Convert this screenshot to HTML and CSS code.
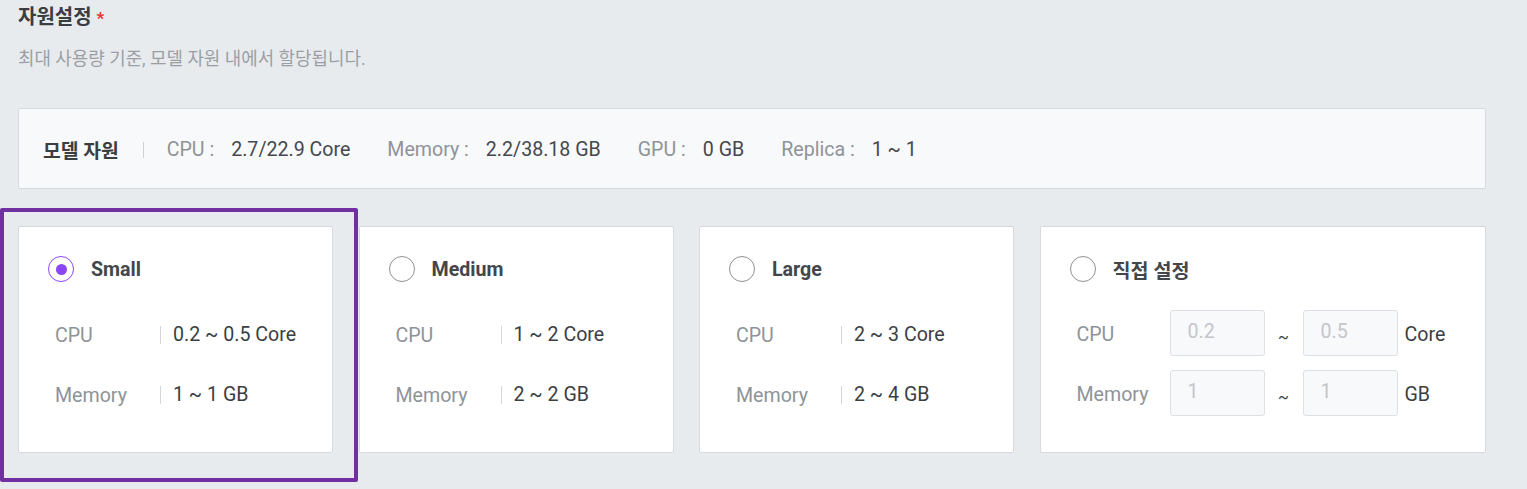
FILE: index.html
```html
<!DOCTYPE html>
<html lang="ko">
<head>
<meta charset="utf-8">
<link rel="stylesheet" href="styles.css">
</head>
<body>
<div class="page">
  <div class="title">자원설정 <span class="req">*</span></div>
  <div class="desc">최대 사용량 기준, 모델 자원 내에서 할당됩니다.</div>

  <div class="model-box">
    <span class="model-title">모델 자원</span>
    <span class="vsep"></span>
    <span class="stat"><span class="stat-label">CPU :</span><span class="stat-value">2.7/22.9 Core</span></span>
    <span class="stat"><span class="stat-label">Memory :</span><span class="stat-value">2.2/38.18 GB</span></span>
    <span class="stat"><span class="stat-label">GPU :</span><span class="stat-value">0 GB</span></span>
    <span class="stat"><span class="stat-label">Replica :</span><span class="stat-value">1 ~ 1</span></span>
  </div>

  <div class="cards">
    <div class="card">
      <div class="card-head"><span class="radio checked"></span><span class="card-name">Small</span></div>
      <div class="spec"><span class="spec-label">CPU</span><span class="spec-value">0.2 ~ 0.5 Core</span></div>
      <div class="spec"><span class="spec-label">Memory</span><span class="spec-value">1 ~ 1 GB</span></div>
    </div>
    <div class="card">
      <div class="card-head"><span class="radio"></span><span class="card-name">Medium</span></div>
      <div class="spec"><span class="spec-label">CPU</span><span class="spec-value">1 ~ 2 Core</span></div>
      <div class="spec"><span class="spec-label">Memory</span><span class="spec-value">2 ~ 2 GB</span></div>
    </div>
    <div class="card">
      <div class="card-head"><span class="radio"></span><span class="card-name">Large</span></div>
      <div class="spec"><span class="spec-label">CPU</span><span class="spec-value">2 ~ 3 Core</span></div>
      <div class="spec"><span class="spec-label">Memory</span><span class="spec-value">2 ~ 4 GB</span></div>
    </div>
    <div class="card custom">
      <div class="card-head"><span class="radio"></span><span class="card-name">직접 설정</span></div>
      <div class="custom-rows">
        <div class="crow">
          <span class="clabel">CPU</span>
          <input class="cinput" value="0.2" disabled>
          <span class="tilde">~</span>
          <input class="cinput" value="0.5" disabled>
          <span class="unit">Core</span>
        </div>
        <div class="crow">
          <span class="clabel">Memory</span>
          <input class="cinput" value="1" disabled>
          <span class="tilde">~</span>
          <input class="cinput" value="1" disabled>
          <span class="unit">GB</span>
        </div>
      </div>
    </div>
  </div>
</div>
<div class="highlight"></div>
</body>
</html>
```

FILE: styles.css
```css
* { box-sizing: border-box; }
html, body {
  margin: 0;
  padding: 0;
  background: #e8ebee;
  width: 1527px;
  height: 489px;
  overflow: hidden;
  font-family: Roboto, "Noto Sans CJK KR", sans-serif;
  color: #3b3e43;
}
.page {
  padding: 4px 41px 0 18px;
}
.title {
  font-size: 20px;
  line-height: 26px;
  font-weight: 700;
  color: #3a3d42;
}
.req { color: #f0302c; font-size: 17px; }
.desc {
  margin-top: 16px;
  font-size: 17.9px;
  line-height: 24px;
  color: #9b9fa4;
}
.model-box {
  margin-top: 37px;
  height: 81px;
  background: #f8f9fa;
  border: 1px solid #d6dade;
  border-radius: 2px;
  display: flex;
  align-items: center;
  padding: 2px 0 0 24px;
  font-size: 19.6px;
}
.model-title {
  font-weight: 700;
  font-size: 19.3px;
  color: #3a3d42;
}
.vsep {
  width: 1px;
  height: 16px;
  background: #cfd3d7;
  margin: 0 23px 0 24px;
}
.stat { display: flex; margin-right: 37px; }
.stat-label { color: #8e9399; margin-right: 17px; }
.stat-value { color: #45484d; }

.cards {
  margin-top: 37px;
  display: grid;
  grid-template-columns: 315px 315px 315px 1fr;
  column-gap: 25.5px;
}
.card {
  height: 227px;
  background: #ffffff;
  border: 1px solid #d6dade;
  border-radius: 2px;
  padding: 29px 0 0 29px;
}
.card-head {
  display: flex;
  align-items: center;
  height: 26px;
  margin-bottom: 41px;
}
.radio {
  width: 26px;
  height: 26px;
  border-radius: 50%;
  border: 1.5px solid #8f9194;
  display: flex;
  align-items: center;
  justify-content: center;
  flex-shrink: 0;
}
.radio.checked { border-color: #8a47f5; }
.radio.checked::after {
  content: "";
  width: 11px;
  height: 11px;
  border-radius: 50%;
  background: #8a47f5;
}
.card-name {
  margin-left: 17px;
  font-size: 19.6px;
  font-weight: 700;
  color: #43464b;
}
.spec {
  display: flex;
  align-items: center;
  height: 24px;
  margin-left: 7px;
  margin-bottom: 36px;
  font-size: 19.6px;
}
.spec-label {
  width: 105px;
  color: #8e9399;
}
.spec-value {
  color: #3b3e43;
  border-left: 1px solid #d3d6da;
  padding-left: 12px;
  line-height: 18px;
}
.custom-rows {
  margin-top: -13px;
  display: flex;
  flex-direction: column;
  gap: 14px;
}
.crow {
  display: flex;
  align-items: center;
  margin-left: 7px;
  font-size: 19.6px;
}
.clabel { width: 93px; color: #8e9399; padding-top: 2px; }
.cinput {
  width: 95px;
  height: 46px;
  border: 1px solid #dcdfe3;
  border-radius: 3px;
  background: #f8f9fa;
  font: inherit;
  font-size: 19.6px;
  color: #c3c6ca;
  padding: 0 0 4px 17px;
  outline: none;
}
.tilde {
  width: 38px;
  text-align: center;
  color: #3b3e43;
  font-size: 16px;
  padding-top: 8px;
}
.unit {
  margin-left: 7px;
  color: #3b3e43;
  padding-top: 2px;
}
.highlight {
  position: absolute;
  left: 0;
  top: 208px;
  width: 358px;
  height: 274px;
  border: 4px solid #7030a0;
  border-radius: 2px;
  pointer-events: none;
}
```
